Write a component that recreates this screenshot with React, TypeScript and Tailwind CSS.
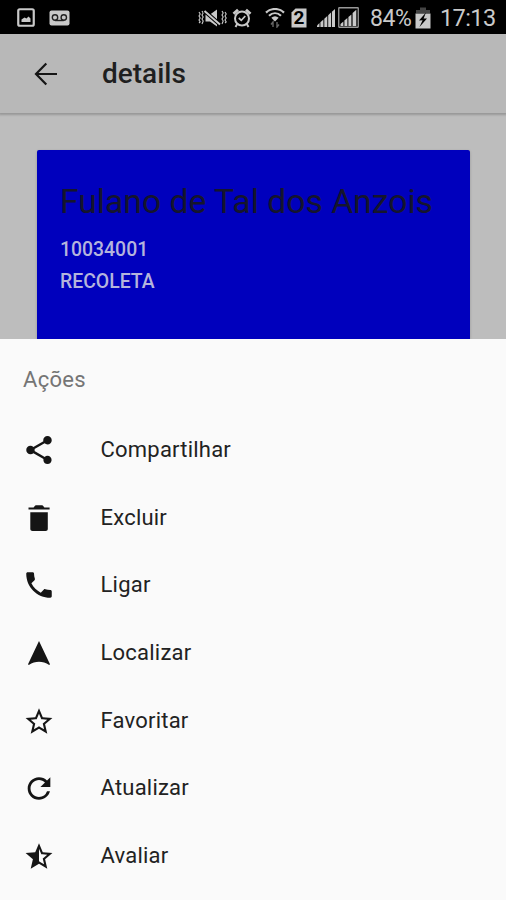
import React from "react"
import {
  IoMdCall,
  IoMdShare,
  IoMdStarHalf,
  IoMdStarOutline,
} from "react-icons/io"
import { MdRefresh } from "react-icons/md"

// ─── Status bar icons ────────────────────────────────────────────────────────

function PictureIcon() {
  return (
    <svg width="18" height="19" viewBox="0 0 18 19" fill="none">
      <rect x="1.25" y="1.25" width="15.5" height="16.5" rx="1.5" stroke="currentColor" strokeWidth="2.2" />
      <path d="M4.5 14V11.5L7.5 9.5L9.5 10.5L11.5 8.5L13.5 10.5V14Z" fill="currentColor" />
    </svg>
  )
}

function VoicemailIcon() {
  return (
    <svg width="21" height="16" viewBox="0 0 21 16" fill="none">
      <rect x="0.5" y="0.5" width="20" height="15" rx="2" fill="currentColor" />
      <g stroke="#222" strokeWidth="1.4">
        <circle cx="6" cy="7.5" r="2.7" />
        <circle cx="14.8" cy="7.5" r="2.7" />
        <path d="M6 10.5H14.8" />
      </g>
    </svg>
  )
}

function VibrateIcon() {
  return (
    <svg width="29" height="18" viewBox="0 0 29 18" fill="none">
      <g stroke="currentColor" strokeWidth="1.1">
        <path d="M1 3L2.2 5L1 7L2.2 9L1 11L2.2 13L1 14" />
        <path d="M4 2L5.2 4L4 6L5.2 8L4 10L5.2 12L4 15" />
        <path d="M24 2L25.2 4L24 6L25.2 8L24 10L25.2 12L24 15" />
        <path d="M27 3L28.2 5L27 7L28.2 9L27 11L28.2 13L27 14" />
      </g>
      <path d="M7.5 5.5H12L19 0.5V17.5L12 12.5H7.5Z" fill="currentColor" />
      <path d="M6.5 2L22 15.5" stroke="#000" strokeWidth="4" />
      <path d="M6.5 2L22 15.5" stroke="currentColor" strokeWidth="2" />
    </svg>
  )
}

function AlarmIcon() {
  return (
    <svg width="20" height="20" viewBox="0 0 20 20" fill="none" stroke="currentColor">
      <circle cx="10" cy="10.5" r="7" strokeWidth="2" />
      <path d="M6.8 10L9.3 12.3L13.3 8" strokeWidth="1.7" />
      <path d="M1.5 5.8L6 1.8M18.5 5.8L14 1.8" strokeWidth="2.8" />
      <path d="M5.5 15.5L3.5 19M14.5 15.5L16.5 19" strokeWidth="2" />
    </svg>
  )
}

function WifiIcon() {
  return (
    <svg width="20" height="20" viewBox="0 0 20 20" fill="none">
      <g stroke="currentColor" strokeWidth="2.2">
        <path d="M1 4.6C6 -0.2 14 -0.2 19 4.6" />
        <path d="M4 7.8C7.6 4.4 12.4 4.4 16 7.8" />
      </g>
      <path d="M6.3 9.8C8.6 7.8 11.4 7.8 13.7 9.8L10 13.5Z" fill="currentColor" />
      <path d="M6 16.5L8 14V19M14 16.5L12 19V14" stroke="#666" strokeWidth="1.4" />
    </svg>
  )
}

function SimIcon() {
  return (
    <span className="relative flex h-[20px] w-4 items-center justify-center text-black">
      <svg className="absolute inset-0 text-[#c9c9c9]" width="16" height="20" viewBox="0 0 16 20">
        <path d="M4.5 0.5H15.5V19.5H0.5V4.5Z" fill="currentColor" />
      </svg>
      <span className="relative text-[19px] font-bold leading-none">2</span>
    </span>
  )
}

function SignalIcon() {
  return (
    <svg width="18" height="18" viewBox="0 0 18 18" fill="currentColor">
      <path d="M0 18V16.5L2.5 14V18Z" />
      <path d="M3.4 18V13.2L6.4 10.6V18Z" />
      <path d="M7.3 18V9.8L10.3 7V18Z" />
      <path d="M11.2 18V6.2L14 3.6V18Z" />
      <path d="M14.9 18V2.8L18 0V18Z" />
    </svg>
  )
}

function BoxedSignalIcon() {
  return (
    <svg width="21" height="21" viewBox="0 0 21 21" fill="none">
      <rect x="0.75" y="0.75" width="19.5" height="19.5" rx="0.5" stroke="#999" strokeWidth="1.3" />
      <g fill="currentColor">
        <path d="M2.5 19V17L5.4 14.6V19Z" />
        <path d="M6.4 19V13.6L9.4 11V19Z" />
        <path d="M10.4 19V10L13.4 7.4V19Z" />
        <path d="M14.6 19V6L18.3 2.8V19Z" />
      </g>
    </svg>
  )
}

function BatteryIcon() {
  return (
    <svg width="16" height="22" viewBox="0 0 16 22">
      <path d="M5 0.5H11V3H15V6H1V3H5Z" fill="#444" />
      <path d="M0.5 6.5H15.5V21.5H0.5Z" fill="currentColor" />
      <path d="M11 5.5L4 13.5L7.6 13.3L4.5 20L12 11.4L8.6 11.6Z" fill="#000" />
    </svg>
  )
}

function StatusBar() {
  return (
    <div className="flex h-[34px] shrink-0 items-center bg-black pl-[17px] pr-[11px] text-[#c9c9c9]">
      <PictureIcon />
      <div className="ml-[14px] pt-px">
        <VoicemailIcon />
      </div>
      <div className="ml-auto flex items-center pt-px">
        <VibrateIcon />
        <div className="ml-[5px]"><AlarmIcon /></div>
        <div className="ml-[13px]"><WifiIcon /></div>
        <div className="ml-[6px]"><SimIcon /></div>
        <div className="ml-[10px]"><SignalIcon /></div>
        <div className="ml-[3px]"><BoxedSignalIcon /></div>
        <span className="ml-[11px] w-[42px] whitespace-nowrap pt-[3px] text-[23px] leading-[30px] tracking-[-0.4px]">84%</span>
        <div className="ml-[3px]"><BatteryIcon /></div>
        <span className="ml-[9px] w-[55px] whitespace-nowrap pt-px text-[23.5px] leading-[30px] tracking-[-0.6px]">17:13</span>
      </div>
    </div>
  )
}

// ─── Action sheet ────────────────────────────────────────────────────────────

interface IconProps {
  size?: number
}

function TrashIcon({ size = 34 }: IconProps) {
  return (
    <svg width={size} height={size} viewBox="0 0 34 34" fill="currentColor">
      <path d="M6.5 6.4H11.6L13 4.8C13.5 4.4 14 4.3 14.5 4.3H19.5C20 4.3 20.5 4.4 21 4.8L22.4 6.4H27.6V8.4H6.5Z" />
      <path d="M8.3 11.2H25.8V27.8C25.8 29.2 24.9 30 23.6 30H10.5C9.2 30 8.3 29.2 8.3 27.8Z" />
    </svg>
  )
}

function NavigateIcon({ size = 34 }: IconProps) {
  return (
    <svg width={size} height={size} viewBox="0 0 34 34" fill="currentColor">
      <path d="M17 5L28 28.3L27.2 29C20.6 24.8 13.4 24.8 6.8 29L6 28.3Z" />
    </svg>
  )
}

const actions = [
  { label: "Compartilhar", Icon: IoMdShare },
  { label: "Excluir",      Icon: TrashIcon },
  { label: "Ligar",        Icon: IoMdCall },
  { label: "Localizar",    Icon: NavigateIcon },
  { label: "Favoritar",    Icon: IoMdStarOutline },
  { label: "Atualizar",    Icon: MdRefresh },
  { label: "Avaliar",      Icon: IoMdStarHalf },
]

function ActionSheet() {
  return (
    <div className="h-[561px] shrink-0 bg-[#fafafa] pt-[15px]">
      <h2 className="h-[62px] pl-[23px] text-[22px] leading-[51px] tracking-[0.3px] text-[#757575]">Ações</h2>
      <ul>
        {actions.map(({ label, Icon }) => (
          <li key={label}>
            <button className="flex h-[67.6px] w-full items-center pl-[22px] text-[#151515]">
              <span className="flex size-[34px] items-center justify-center pt-px">
                <Icon size={label === "Atualizar" ? 35 : 34} />
              </span>
              <span className="ml-[44.5px] pt-px text-[22px] leading-none tracking-[0.22px] text-[#222]">{label}</span>
            </button>
          </li>
        ))}
      </ul>
    </div>
  )
}

export default function App() {
  return (
    <div className="flex h-[900px] w-[506px] flex-col overflow-hidden bg-[#bdbdbd] font-[Roboto,sans-serif]">
      <StatusBar />
      <header className="flex h-[79px] shrink-0 items-center bg-[#b8b8b8] pl-[34px] text-[#151515] shadow-[0_1px_2px_1px_rgba(0,0,0,0.2)]">
        <svg width="24" height="24" viewBox="0 0 24 24" fill="none" stroke="currentColor" strokeWidth="2.2">
          <path d="M23 12H2.5M12.3 1.5L2 12L12.3 22.5" />
        </svg>
        <h1 className="ml-[44px] text-[28px] font-medium leading-none text-[#1f1f1f]">details</h1>
      </header>
      <main className="min-h-0 flex-1 pl-[37px] pr-[36px] pt-[37px]">
        <div className="h-full rounded-t-[2px] bg-[#0000bd] px-[23px] pt-[32px] shadow-[0_1px_3px_rgba(0,0,0,0.2)]">
          <h2 className="whitespace-nowrap text-[33.7px] leading-[40px] text-[#15152c]">Fulano de Tal dos Anzois</h2>
          <p className="mt-[12px] text-[19.4px] font-medium leading-[32px] text-[#b4b4dc]">10034001</p>
          <p className="text-[19.4px] font-medium leading-[32px] text-[#b4b4dc]">RECOLETA</p>
        </div>
      </main>
      <ActionSheet />
    </div>
  )
}
